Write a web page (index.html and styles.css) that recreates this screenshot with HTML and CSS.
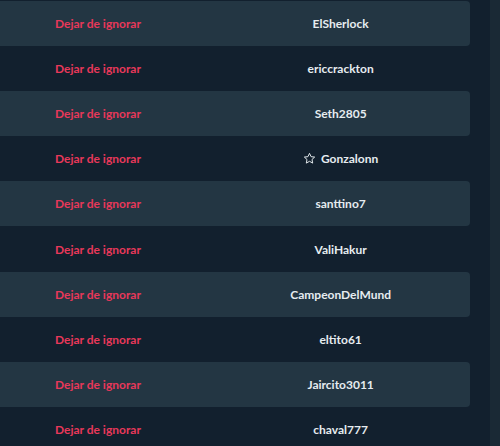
FILE: index.html
```html
<!DOCTYPE html>
<html>
<head>
<meta charset="utf-8">
<link rel="stylesheet" href="styles.css">
</head>
<body>
<div class="page">
  <div class="list">
    <div class="row alt"><span class="action">Dejar de ignorar</span><span class="name">ElSherlock</span></div>
    <div class="row"><span class="action">Dejar de ignorar</span><span class="name">ericcrackton</span></div>
    <div class="row alt"><span class="action">Dejar de ignorar</span><span class="name">Seth2805</span></div>
    <div class="row"><span class="action">Dejar de ignorar</span><span class="name"><svg class="star" viewBox="0 0 24 24" width="13" height="13"><path d="M12 2.5l2.9 6.1 6.6.8-4.9 4.5 1.3 6.6L12 17.2l-5.9 3.3 1.3-6.6-4.9-4.5 6.6-.8z" fill="none" stroke="#e6ecf0" stroke-width="1.8" stroke-linejoin="round"/></svg>Gonzalonn</span></div>
    <div class="row alt"><span class="action">Dejar de ignorar</span><span class="name">santtino7</span></div>
    <div class="row"><span class="action">Dejar de ignorar</span><span class="name">ValiHakur</span></div>
    <div class="row alt"><span class="action">Dejar de ignorar</span><span class="name">CampeonDelMund</span></div>
    <div class="row"><span class="action">Dejar de ignorar</span><span class="name">eltito61</span></div>
    <div class="row alt"><span class="action">Dejar de ignorar</span><span class="name">Jaircito3011</span></div>
    <div class="row"><span class="action">Dejar de ignorar</span><span class="name">chaval777</span></div>
  </div>
  <div class="scrollbar"></div>
</div>
</body>
</html>
```
FILE: styles.css
```css
html, body {
  margin: 0;
  padding: 0;
  background: #12202e;
  overflow: hidden;
}
.page {
  display: flex;
  width: 500px;
  height: 446px;
  font-family: Lato, "Open Sans", sans-serif;
  font-weight: 700;
  font-size: 12px;
}
.list {
  width: 470px;
  padding-top: 1px;
  margin-right: 20px;
}
.row {
  height: 45.1px;
  display: flex;
  align-items: center;
  border-radius: 0 4px 4px 0;
}
.row.alt {
  background: #233643;
}
.action {
  color: #e8385a;
  width: 157px;
  padding-left: 55px;
  box-sizing: content-box;
}
.name {
  color: #e6ecf0;
  width: 260px;
  display: flex;
  justify-content: center;
  align-items: center;
}
.star {
  margin-right: 5px;
}
.scrollbar {
  width: 10px;
  background: #1a2935;
}
```
